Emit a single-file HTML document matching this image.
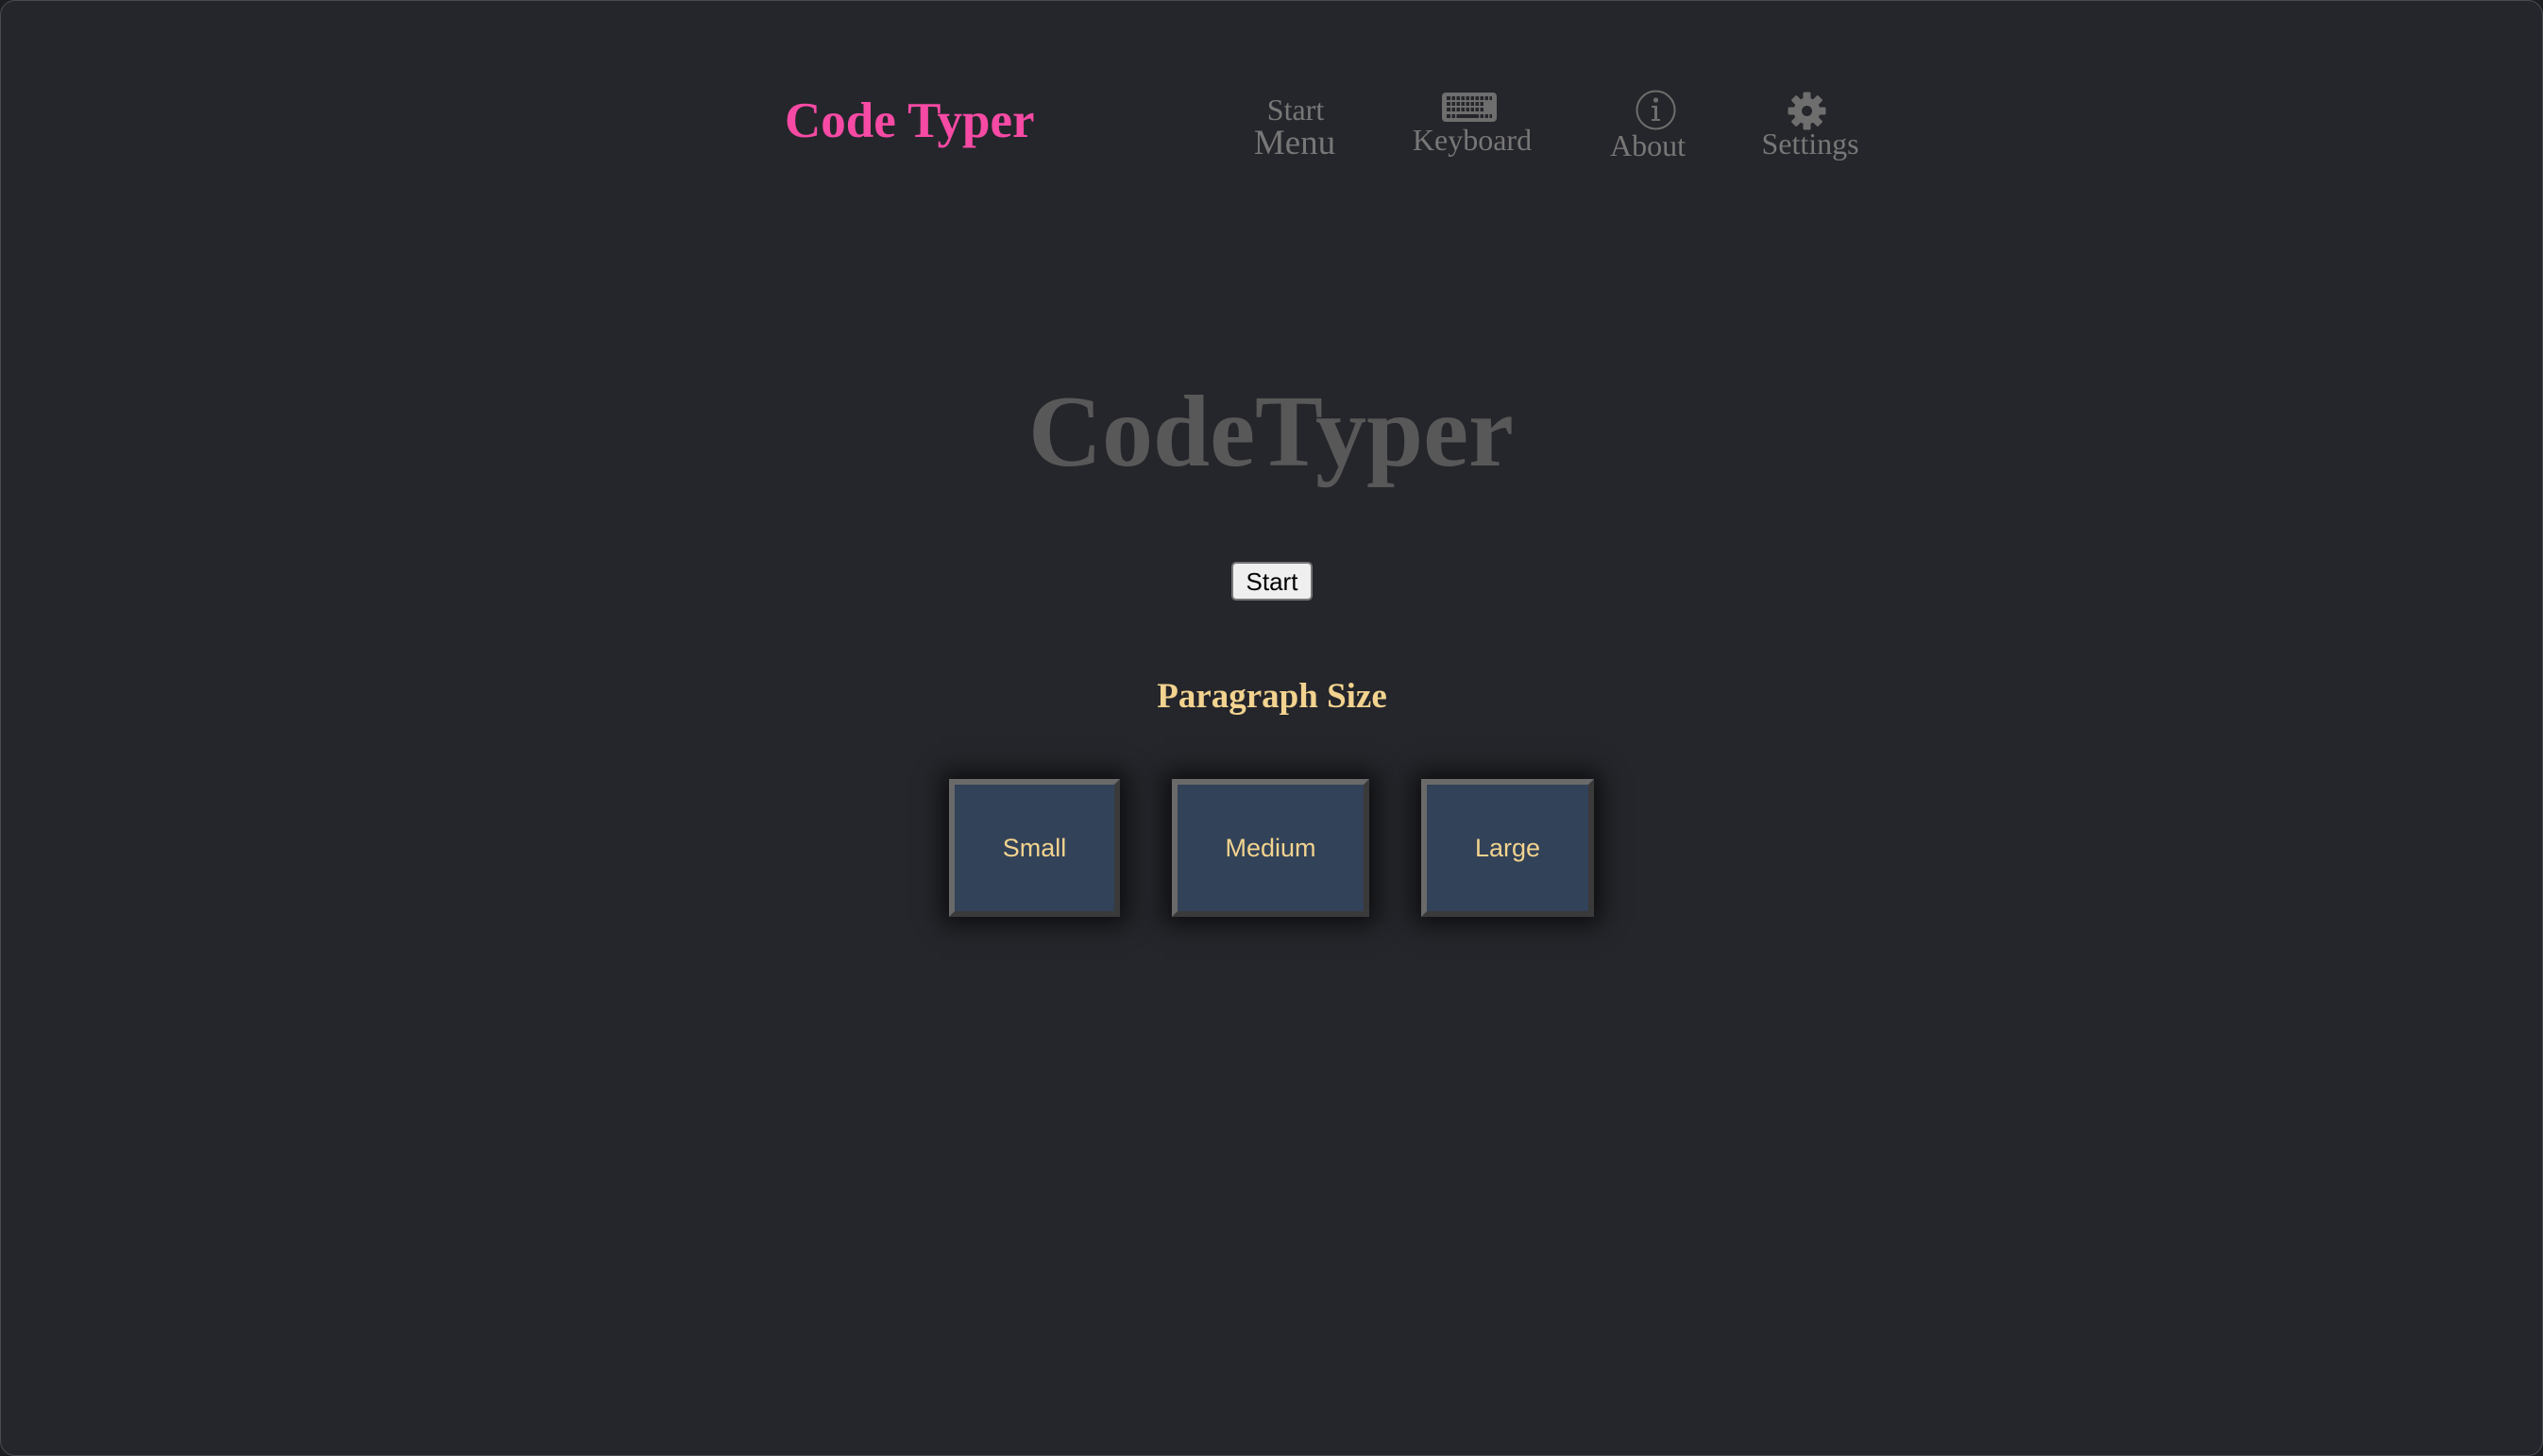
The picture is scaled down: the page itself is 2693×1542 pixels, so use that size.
<!DOCTYPE html>
<html><head><meta charset="utf-8"><style>
html,body{margin:0;padding:0;width:2693px;height:1542px;overflow:hidden;background:#1d1e22}
.page{position:absolute;left:0;top:0;width:2691px;height:1540px;border:1px solid #4a4b50;border-radius:16px;background:#25262b;font-family:"Liberation Serif",serif;color:#777}
.abs{position:absolute;white-space:nowrap;line-height:1}
.nav{font-size:32px;color:#777;transform:translateX(-50%)}
.box{position:absolute;top:824px;height:146px;box-sizing:border-box;background:#324258;border:6px solid;border-color:#6a6a6a #3a3a3a #3a3a3a #6a6a6a;box-shadow:0 0 24px 8px rgba(0,0,0,.65);color:#f2d38f;font-family:"Liberation Sans",sans-serif;font-size:27px;display:flex;align-items:center;justify-content:center}
</style></head><body><div class="page">
<div class="abs" style="left:830px;top:101px;font-size:53px;font-weight:bold;color:#f64aa4">Code Typer</div>

<div class="abs nav" style="left:1371px;top:99px;font-size:32px">Start</div>
<div class="abs nav" style="left:1370px;top:132px;font-size:37px">Menu</div>

<svg class="abs" style="left:1525px;top:96px" width="60" height="33" viewBox="0 0 60 33">
<rect x="1" y="1" width="58" height="31" rx="4" fill="#6e6e6e"/>
<g fill="#25262b">
<rect x="6" y="5" width="48" height="4"/>
<rect x="6" y="11" width="48" height="4"/>
<rect x="6" y="17" width="48" height="4"/>
<rect x="6" y="24" width="48" height="4"/>
</g>
<g fill="#6e6e6e">
<rect x="10" y="5" width="1.5" height="23"/><rect x="15" y="5" width="1.5" height="23"/><rect x="20" y="5" width="1.5" height="18"/><rect x="25" y="5" width="1.5" height="18"/><rect x="30" y="5" width="1.5" height="18"/><rect x="35" y="5" width="1.5" height="18"/><rect x="40" y="5" width="1.5" height="23"/><rect x="45" y="5" width="1.5" height="23"/><rect x="50" y="5" width="1.5" height="23"/>
<rect x="45" y="11" width="9" height="10"/>
</g>
</svg>
<div class="abs nav" style="left:1558px;top:131px">Keyboard</div>

<svg class="abs" style="left:1731px;top:94px" width="43" height="43" viewBox="0 0 43 43">
<circle cx="21.5" cy="21.5" r="20" fill="none" stroke="#6e6e6e" stroke-width="2"/>
<circle cx="21.5" cy="11" r="2.6" fill="#6e6e6e"/>
<path d="M17 17h6v14h3v2h-9v-2h3v-12h-3z" fill="#6e6e6e"/>
</svg>
<div class="abs nav" style="left:1744px;top:137px">About</div>

<svg class="abs" style="left:1892px;top:96px" width="41" height="41" viewBox="-20.5 -20.5 41 41">
<g fill="#6e6e6e">
<circle r="14"/>
<g id="t"><rect x="-4" y="-20" width="8" height="9" rx="1.5"/></g>
<use href="#t" transform="rotate(45)"/><use href="#t" transform="rotate(90)"/><use href="#t" transform="rotate(135)"/><use href="#t" transform="rotate(180)"/><use href="#t" transform="rotate(225)"/><use href="#t" transform="rotate(270)"/><use href="#t" transform="rotate(315)"/>
</g>
<circle r="5.5" fill="#25262b"/>
</svg>
<div class="abs nav" style="left:1916px;top:135px">Settings</div>

<div class="abs" style="left:1345px;top:403px;transform:translateX(-50%);font-size:108px;font-weight:bold;color:#585858">CodeTyper</div>

<div class="abs" style="left:1303px;top:594px;width:86px;height:41px;box-sizing:border-box;background:#efefef;border:2px solid #767676;border-radius:5px;font-family:'Liberation Sans',sans-serif;font-size:26px;color:#000;display:flex;align-items:center;justify-content:center">Start</div>

<div class="abs" style="left:1346px;top:718px;transform:translateX(-50%);font-size:37px;font-weight:bold;color:#f2d38f">Paragraph Size</div>

<div class="box" style="left:1004px;width:181px">Small</div>
<div class="box" style="left:1240px;width:209px">Medium</div>
<div class="box" style="left:1504px;width:183px">Large</div>
</div></body></html>
